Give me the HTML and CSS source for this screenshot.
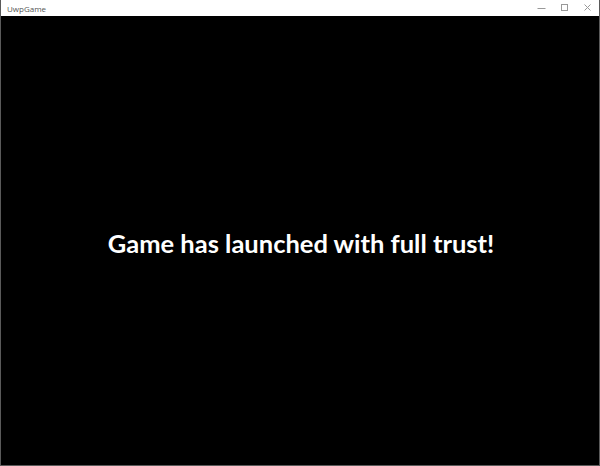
FILE: index.html
```html
<!DOCTYPE html>
<html>
<head>
<meta charset="utf-8">
<link rel="stylesheet" href="styles.css">
</head>
<body>
<div class="window">
  <div class="titlebar">
    <span class="title">UwpGame</span>
    <div class="controls">
      <span class="ctl"><svg width="10" height="10" viewBox="0 0 10 10"><path d="M0.5 5.5h8" stroke="#999" stroke-width="1"/></svg></span>
      <span class="ctl"><svg width="10" height="10" viewBox="0 0 10 10"><rect x="1.5" y="1.5" width="6" height="6" fill="none" stroke="#999" stroke-width="1"/></svg></span>
      <span class="ctl"><svg width="10" height="10" viewBox="0 0 10 10"><path d="M1.5 1.5l6 6M7.5 1.5l-6 6" stroke="#999" stroke-width="1"/></svg></span>
    </div>
  </div>
  <div class="content">
    <p class="message">Game has launched with full trust!</p>
  </div>
</div>
</body>
</html>
```
FILE: styles.css
```css
html, body {
  margin: 0;
  padding: 0;
  width: 600px;
  height: 466px;
  overflow: hidden;
  background: #000;
}
.window {
  box-sizing: border-box;
  width: 600px;
  height: 466px;
  border: 1px solid #5a5a5a;
  border-top: none;
  display: flex;
  flex-direction: column;
}
.titlebar {
  height: 16px;
  background: #fff;
  display: flex;
  align-items: center;
  justify-content: space-between;
  padding-left: 6px;
}
.title {
  font-family: "Open Sans", "DejaVu Sans", sans-serif;
  font-size: 8px;
  color: #555;
}
.controls {
  display: flex;
  height: 16px;
}
.ctl {
  width: 23px;
  display: flex;
  align-items: center;
  justify-content: center;
}
.content {
  flex: 1;
  background: #000;
  display: flex;
  align-items: center;
  justify-content: center;
}
.message {
  margin: 0 0 0 2px;
  padding-top: 4px;
  font-family: "Lato", "Open Sans", sans-serif;
  font-weight: 700;
  font-size: 25.5px;
  color: #fff;
}
```
